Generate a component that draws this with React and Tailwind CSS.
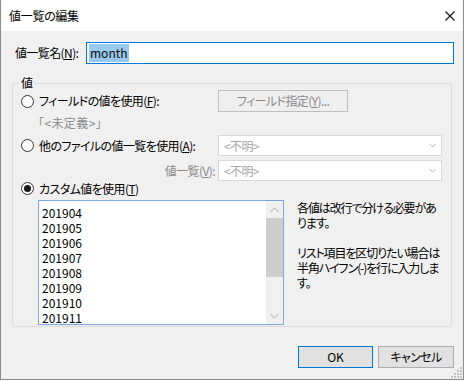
import React from 'react';

const font = {
  fontFamily: '"Noto Sans CJK JP", "Noto Sans", sans-serif',
};

const Radio = ({ checked }) => (
  <span className="w-[13px] h-[13px] rounded-full border border-[#333333] bg-white flex items-center justify-center shrink-0">
    {checked && <span className="w-[7px] h-[7px] rounded-full bg-[#1a1a1a]" />}
  </span>
);

const Chevron = ({ up }) => (
  <svg width="9" height="6" viewBox="0 0 9 6">
    <polyline
      points={up ? '0.5,5 4.5,1 8.5,5' : '0.5,1 4.5,5 8.5,1'}
      fill="none"
      stroke="#a6a6a6"
      strokeWidth="1"
    />
  </svg>
);

const Combo = () => (
  <div className="w-[224px] h-[21px] bg-white border border-[#d9d9d9] flex items-center justify-between pl-[5px] pr-[5px]">
    <span className="text-[#a6a6a6]">&lt;不明&gt;</span>
    <svg width="7" height="5" viewBox="0 0 7 5">
      <polyline points="0.5,1 3.5,4 6.5,1" fill="none" stroke="#b4b4b4" strokeWidth="1" />
    </svg>
  </div>
);

const values = ['201904', '201905', '201906', '201907', '201908', '201909', '201910', '201911'];

export default function App() {
  return (
    <div className="w-[465px] h-[381px] bg-white" style={font}>
      <div className="relative w-[464px] h-[380px] border-x border-b border-[#8c8c8c] bg-[#f0f0f0] text-[12px] leading-[16px] text-black tracking-[-0.6px] [font-feature-settings:'palt']">
        {/* title bar */}
        <div className="h-[31px] bg-white flex items-center justify-between pl-[8px] pr-[8px]">
          <span className="text-[12px] tracking-[-0.3px]">値一覧の編集</span>
          <svg width="10" height="10" viewBox="0 0 10 10">
            <path d="M0.5 0.5 L9.5 9.5 M9.5 0.5 L0.5 9.5" stroke="#111" strokeWidth="1.1" />
          </svg>
        </div>

        {/* name row */}
        <div className="mt-[11px] h-[22px] flex items-center pl-[14px]">
          <span className="w-[71px] whitespace-nowrap">
            値一覧名(<span className="underline">N</span>):
          </span>
          <div className="w-[368px] h-[22px] bg-white border border-[#0078d7] flex items-center pl-[2px]">
            <span className="bg-[#99c9ef] text-[#0a0a0a] px-[1px] leading-[18px] tracking-normal">month</span>
          </div>
        </div>

        {/* group box */}
        <div className="relative mt-[19px] ml-[11px] w-[440px] h-[244px] border border-[#dcdcdc] rounded-[2px]">
          <span className="absolute -top-[9px] left-[6px] px-[2px] bg-[#f0f0f0]">値</span>

          <div className="mt-[6px] h-[22px] flex items-center">
            <div className="w-[205px] flex items-center pl-[8px] gap-[5px]">
              <Radio />
              <span className="whitespace-nowrap">
                フィールドの値を使用(<span className="underline">F</span>):
              </span>
            </div>
            <div className="w-[130px] h-[22px] border border-[#bfbfbf] bg-[#efefef] flex items-center justify-center text-[#8a8a8a]">
              <span>
                フィールド指定(<span className="underline">Y</span>)...
              </span>
            </div>
          </div>

          <div className="mt-[3px] h-[16px] pl-[25px] text-[#8a8a8a] tracking-[0.4px]">「&lt;未定義&gt;」</div>

          <div className="mt-[4px] h-[21px] flex items-center">
            <div className="w-[205px] flex items-center pl-[8px] gap-[5px]">
              <Radio />
              <span className="whitespace-nowrap">
                他のファイルの値一覧を使用(<span className="underline">A</span>):
              </span>
            </div>
            <Combo />
          </div>

          <div className="mt-[4px] h-[21px] flex items-center">
            <div className="w-[205px] flex justify-end pr-[3px] text-[#8a8a8a]">
              <span>
                値一覧(<span className="underline">V</span>):
              </span>
            </div>
            <Combo />
          </div>

          <div className="h-[15px] flex items-center pl-[8px] gap-[5px]">
            <Radio checked />
            <span className="whitespace-nowrap">
              カスタム値を使用(<span className="underline">T</span>)
            </span>
          </div>

          <div className="mt-[4px] flex items-start pl-[25px]">
            <div className="w-[246px] h-[125px] bg-white border border-[#7aa7e0] flex">
              <div className="flex-1 pl-[3px] pt-[4px] leading-[15px] tracking-normal overflow-hidden">
                {values.map((v) => (
                  <div key={v}>{v}</div>
                ))}
              </div>
              <div className="w-[17px] bg-[#f0f0f0] flex flex-col items-center">
                <div className="h-[17px] flex items-center justify-center">
                  <Chevron up />
                </div>
                <div className="w-[17px] h-[59px] bg-[#cdcdcd]" />
                <div className="flex-1" />
                <div className="h-[17px] flex items-center justify-center">
                  <Chevron />
                </div>
              </div>
            </div>
            <div className="ml-[13px] leading-[15px] whitespace-nowrap tracking-[-1.1px]">
              <div>各値は改行で分ける必要があ</div>
              <div>ります。</div>
              <div className="h-[15px]" />
              <div>リスト項目を区切りたい場合は</div>
              <div>半角ハイフン(-)を行に入力しま</div>
              <div>す。</div>
            </div>
          </div>
        </div>

        {/* buttons */}
        <div className="mt-[19px] flex justify-end gap-[5px] pr-[9px]">
          <button className="w-[75px] h-[22px] bg-[#e1e1e1] border border-[#0078d7] flex items-center justify-center tracking-normal">
            OK
          </button>
          <button className="w-[76px] h-[22px] bg-[#e1e1e1] border border-[#adadad] flex items-center justify-center">
            キャンセル
          </button>
        </div>

        {/* resize grip */}
        <svg className="absolute right-[1px] bottom-[1px]" width="11" height="11" viewBox="0 0 11 11">
          {[
            [9, 1], [9, 4], [6, 4], [9, 7], [6, 7], [3, 7], [9, 10], [6, 10], [3, 10], [0, 10],
          ].map(([x, y]) => (
            <rect key={`${x}-${y}`} x={x} y={y - 1} width="2" height="2" fill="#c4c4c4" />
          ))}
        </svg>
      </div>
    </div>
  );
}
